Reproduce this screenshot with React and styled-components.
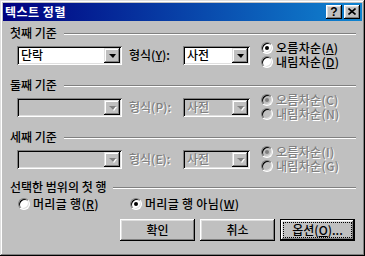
import React from 'react'
import styled, { createGlobalStyle } from 'styled-components';

const GlobalStyle = createGlobalStyle`
  html, body {
    margin: 0;
    padding: 0;
    background: #c0c0c0;
  }
  * {
    box-sizing: border-box;
  }
`;

const FONT = `"Noto Sans CJK KR", "Noto Sans", sans-serif`;

const Window = styled.div`
  width: 365px;
  height: 256px;
  padding: 3px;
  background: #c0c0c0;
  font-family: ${FONT};
  font-size: 12px;
  font-weight: 500;
  line-height: 14px;
  color: #000;
  box-shadow: inset -1px -1px #000, inset 1px 1px #dfdfdf,
    inset -2px -2px #808080, inset 2px 2px #fff;
  display: flex;
  flex-direction: column;
`;

const TitleBar = styled.div`
  height: 18px;
  display: flex;
  align-items: center;
  padding: 0 2px 0 2px;
  background: linear-gradient(to right, #000080, #1084d0);
  color: #fff;
`;

const Title = styled.div`
  flex: 1;
  font-weight: bold;
  font-size: 12px;
  letter-spacing: 0.5px;
`;

const TitleButtons = styled.div`
  display: flex;
  gap: 2px;
`;

const TitleButton = styled.div`
  width: 16px;
  height: 14px;
  background: #c0c0c0;
  color: #000;
  box-shadow: inset -1px -1px #000, inset 1px 1px #fff,
    inset -2px -2px #808080, inset 2px 2px #dfdfdf;
  display: flex;
  align-items: center;
  justify-content: center;
  font-family: "Liberation Sans", sans-serif;
  font-weight: bold;
  font-size: 12px;
  padding-bottom: 1px;
`;

const Content = styled.div`
  flex: 1;
  display: flex;
  flex-direction: column;
  padding: 5px 6px 0 6px;
`;

const SectionHeader = styled.div`
  height: 14px;
  display: flex;
  align-items: center;
  gap: 7px;
  padding-left: 1px;
  margin-top: ${p => p.$top}px;
  white-space: nowrap;
`;

const Etch = styled.div`
  flex: 1;
  height: 2px;
  border-top: 1px solid #808080;
  border-bottom: 1px solid #fff;
  margin-top: 1px;
`;

const SortRow = styled.div`
  height: 28px;
  margin-top: 1px;
  display: flex;
  align-items: center;
  padding-left: 8px;
`;

const Combo = styled.div`
  width: ${p => p.$width}px;
  height: 19px;
  padding: 2px;
  display: flex;
  align-items: center;
  background: ${p => (p.$disabled ? '#c0c0c0' : '#fff')};
  box-shadow: inset 1px 1px #808080, inset -1px -1px #fff,
    inset 2px 2px #000, inset -2px -2px #dfdfdf;
`;

const ComboText = styled.div`
  flex: 1;
  padding-left: 2px;
  white-space: nowrap;
  color: ${p => (p.$disabled ? '#808080' : '#000')};
  text-shadow: ${p => (p.$disabled ? '1px 1px 0 #fff' : 'none')};
`;

const DropButton = styled.div`
  width: 16px;
  height: 15px;
  background: #c0c0c0;
  box-shadow: inset -1px -1px #000, inset 1px 1px #dfdfdf,
    inset -2px -2px #808080, inset 2px 2px #fff;
  display: flex;
  align-items: center;
  justify-content: center;

  &::after {
    content: '';
    width: 0;
    height: 0;
    border-left: 4px solid transparent;
    border-right: 3px solid transparent;
    border-top: 4px solid ${p => (p.$disabled ? '#808080' : '#000')};
    filter: ${p => (p.$disabled ? 'drop-shadow(1px 1px 0 #fff)' : 'none')};
    margin-top: 1px;
  }
`;

const Label = styled.div`
  width: 54px;
  margin-left: 7px;
  white-space: nowrap;
  color: ${p => (p.$disabled ? '#808080' : '#000')};
  text-shadow: ${p => (p.$disabled ? '1px 1px 0 #fff' : 'none')};
`;

const RadioGroup = styled.div`
  display: flex;
  flex-direction: column;
  margin-left: 11px;
`;

const RadioItem = styled.div`
  height: 14px;
  display: flex;
  align-items: center;
  gap: 3px;
  white-space: nowrap;
  letter-spacing: 0.3px;
  width: ${p => (p.$width ? `${p.$width}px` : 'auto')};
  color: ${p => (p.$disabled ? '#808080' : '#000')};
  text-shadow: ${p => (p.$disabled ? '1px 1px 0 #fff' : 'none')};
`;

const RadioCircle = styled.span`
  flex: none;
  width: 12px;
  height: 12px;
  border-radius: 50%;
  background: ${p => (p.$disabled ? '#c0c0c0' : '#fff')};
  border: 1px solid;
  border-color: #808080 #fff #fff #808080;
  box-shadow: inset 1px 1px #000, inset -1px -1px #dfdfdf;
  display: flex;
  align-items: center;
  justify-content: center;

  &::after {
    content: '';
    display: ${p => (p.$checked ? 'block' : 'none')};
    width: 4px;
    height: 4px;
    border-radius: 50%;
    background: ${p => (p.$disabled ? '#808080' : '#000')};
  }
`;

const HeaderRadioRow = styled.div`
  height: 14px;
  margin-top: 3px;
  display: flex;
  align-items: center;
  padding-left: 9px;
`;

const ButtonRow = styled.div`
  display: flex;
  justify-content: flex-end;
  gap: 5px;
  margin-top: 8px;
  padding-right: 1px;
`;

const Button = styled.div`
  width: 75px;
  height: 22px;
  background: #c0c0c0;
  display: flex;
  align-items: center;
  justify-content: center;
  box-shadow: ${p =>
    p.$default
      ? 'inset 0 0 0 1px #000, inset -2px -2px #000, inset 2px 2px #fff, inset -3px -3px #808080, inset 3px 3px #dfdfdf'
      : 'inset -1px -1px #000, inset 1px 1px #fff, inset -2px -2px #808080, inset 2px 2px #dfdfdf'};
`;

const FocusRing = styled.span`
  width: 67px;
  height: 14px;
  outline: 1px dotted #000;
  outline-offset: 0;
  text-align: center;
`;

const sorts = [
  { title: '첫째 기준', field: '단락', key: 'Y', up: 'A', down: 'D', disabled: false, top: 0 },
  { title: '둘째 기준', field: '', key: 'P', up: 'C', down: 'N', disabled: true, top: 9 },
  { title: '세째 기준', field: '', key: 'E', up: 'I', down: 'G', disabled: true, top: 9 },
];

const Radio = ({ checked, disabled, children, width }) => (
  <RadioItem $disabled={disabled} $width={width}>
    <RadioCircle $checked={checked} $disabled={disabled} />
    <span>{children}</span>
  </RadioItem>
);

const Mn = ({ k, disabled }) => (disabled ? <>({k})</> : <>(<u>{k}</u>)</>);

const App = () => {
  return (
    <>
      <GlobalStyle />
      <Window>
        <TitleBar>
          <Title>텍스트 정렬</Title>
          <TitleButtons>
            <TitleButton>?</TitleButton>
            <TitleButton>
              <svg width="8" height="7" viewBox="0 0 8 7">
                <path d="M0.5 0.5 L7.5 6.5 M7.5 0.5 L0.5 6.5" stroke="#000" strokeWidth="1.6" />
              </svg>
            </TitleButton>
          </TitleButtons>
        </TitleBar>
        <Content>
          {sorts.map(s => (
            <React.Fragment key={s.title}>
              <SectionHeader $top={s.top}>
                <span>{s.title}</span>
                <Etch />
              </SectionHeader>
              <SortRow>
                <Combo $width={105} $disabled={s.disabled}>
                  <ComboText>{s.field}</ComboText>
                  <DropButton $disabled={s.disabled} />
                </Combo>
                <Label $disabled={s.disabled}>
                  형식<Mn k={s.key} disabled={s.disabled} />:
                </Label>
                <Combo $width={67} $disabled={s.disabled}>
                  <ComboText $disabled={s.disabled}>사전</ComboText>
                  <DropButton $disabled={s.disabled} />
                </Combo>
                <RadioGroup>
                  <Radio checked disabled={s.disabled}>
                    오름차순<Mn k={s.up} disabled={s.disabled} />
                  </Radio>
                  <Radio disabled={s.disabled}>
                    내림차순<Mn k={s.down} disabled={s.disabled} />
                  </Radio>
                </RadioGroup>
              </SortRow>
            </React.Fragment>
          ))}
          <SectionHeader $top={7}>
            <span>선택한 범위의 첫 행</span>
            <Etch />
          </SectionHeader>
          <HeaderRadioRow>
            <Radio width={112}>
              머리글 행<Mn k="R" />
            </Radio>
            <Radio checked>
              머리글 행 아님<Mn k="W" />
            </Radio>
          </HeaderRadioRow>
          <ButtonRow>
            <Button>확인</Button>
            <Button>취소</Button>
            <Button $default>
              <FocusRing>
                옵션<Mn k="O" />...
              </FocusRing>
            </Button>
          </ButtonRow>
        </Content>
      </Window>
    </>
  );
};

export default App
